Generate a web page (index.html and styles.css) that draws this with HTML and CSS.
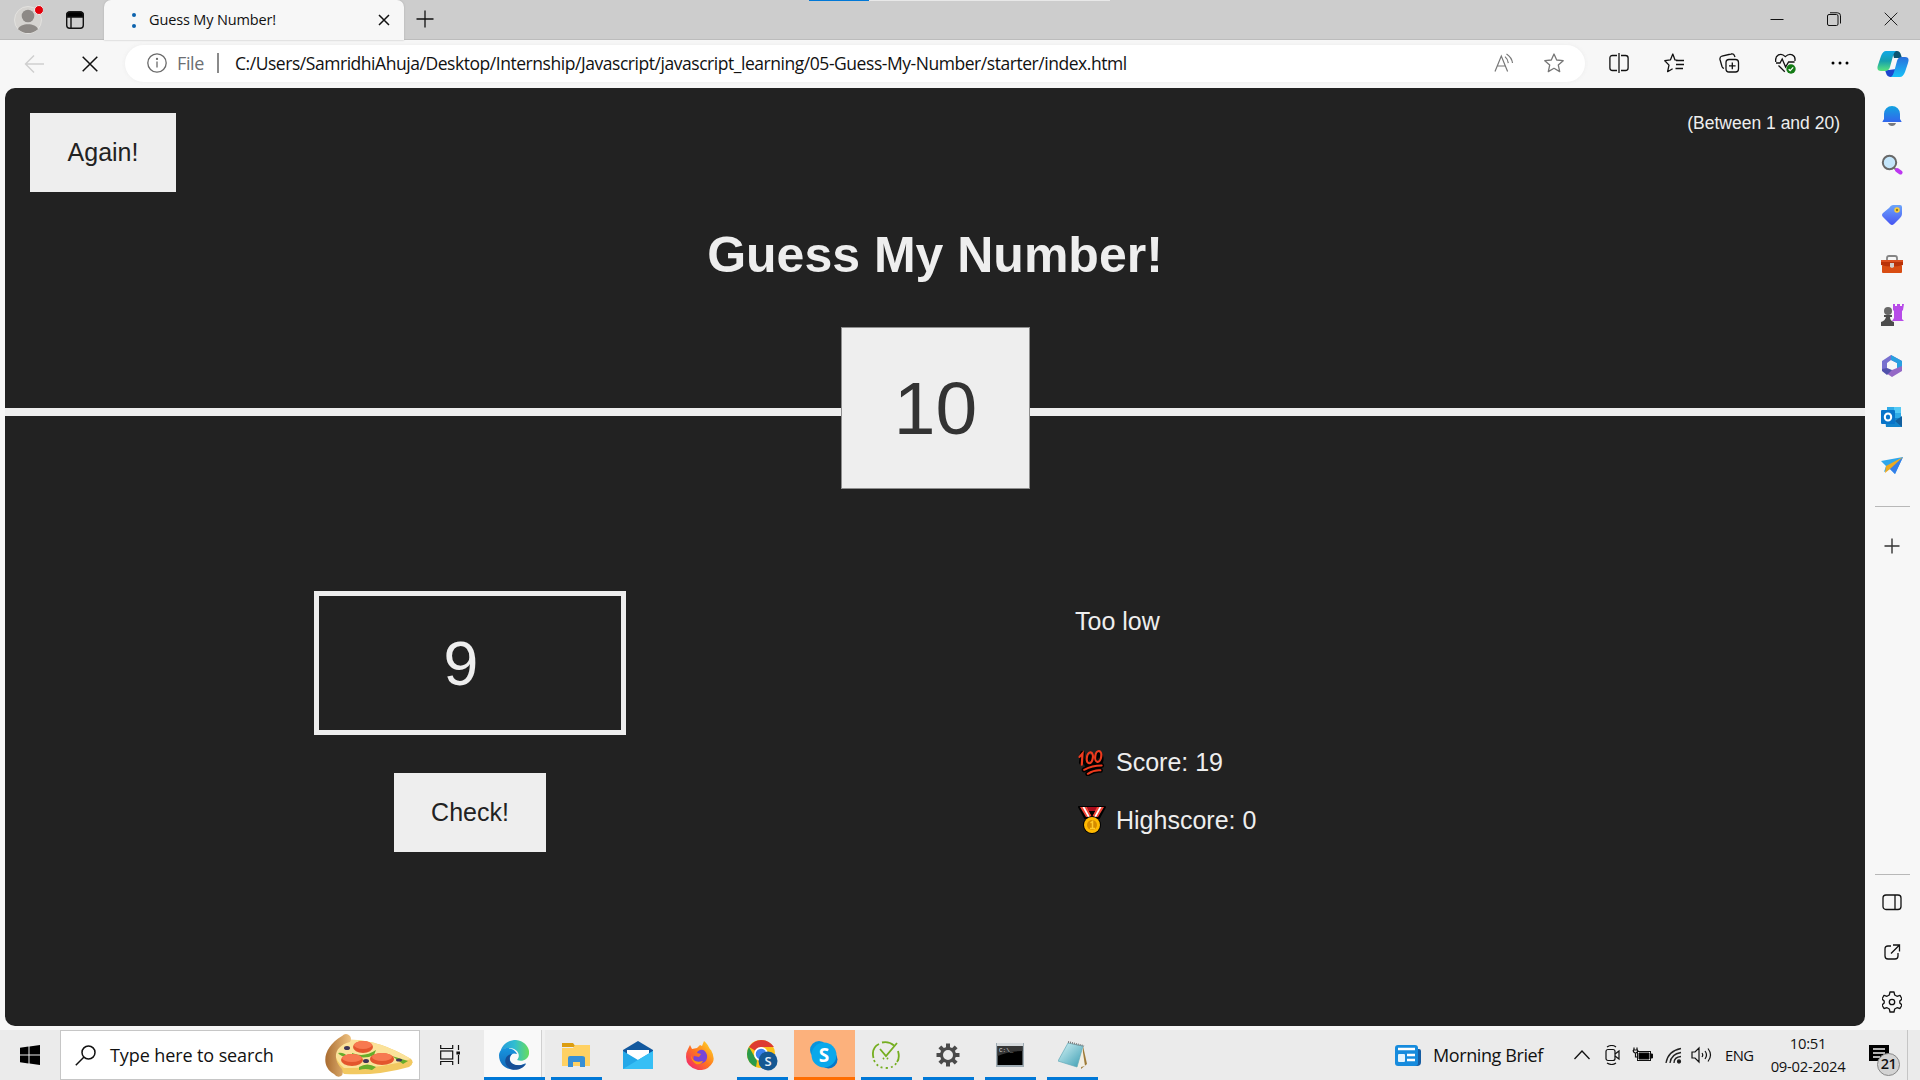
FILE: index.html
```html
<!DOCTYPE html>
<html lang="en">
<head>
<meta charset="utf-8">
<title>Guess My Number!</title>
<link rel="stylesheet" href="styles.css">
</head>
<body>
<header class="titlebar">
  <div class="profile"><svg width="30" height="30" viewBox="0 0 30 30"><circle cx="15" cy="16" r="13.5" fill="#d5d3d0" stroke="#e3e2df"/><circle cx="15" cy="12" r="6.3" fill="#8d8986"/><path d="M5 25.200C7 18.500 23 18.500 25 25.200Q15 33 5 25.200" fill="#8d8986"/><circle cx="26" cy="6" r="4.500" fill="#e3000b" stroke="#eee"/></svg></div>
  <div class="workspaces"><svg width="20" height="20" viewBox="0 0 20 20" fill="none" stroke="#111" stroke-width="1.400"><rect x="1.700" y="2" width="16.600" height="16.300" rx="3"/><path d="M6 7v11"/><path d="M2 7V5q0-3 3-3h10q3 0 3 3v2z" fill="#000"/></svg></div>
  <div class="tab">
    <span class="loader"><i></i><i></i></span>
    <span class="tab-title">Guess My Number!</span>
    <svg class="tab-close" width="12" height="12" viewBox="0 0 12 12" stroke="#111" stroke-width="1.500"><path d="M1 1l10 10M11 1L1 11"/></svg>
  </div>
  <svg class="tab-new" width="18" height="18" viewBox="0 0 18 18" stroke="#111" stroke-width="1.300"><path d="M9 .5v17M.5 9h17"/></svg>
  <div class="strip"><i></i></div>
  <div class="window-buttons">
    <svg width="14" height="14" viewBox="0 0 14 14" stroke="#111"><path d="M.5 7.500h13"/></svg>
    <svg width="14" height="14" viewBox="0 0 14 14" fill="none" stroke="#111"><rect x=".5" y="2.500" width="10.500" height="11" rx="1.500"/><path d="M3 .8h7.500q3 0 3 3v7.700"/></svg>
    <svg width="14" height="14" viewBox="0 0 14 14" stroke="#222"><path d="M.7.7l12.600 12.600M13.300.7L.7 13.300"/></svg>
  </div>
</header>
<div class="window">
  <div class="left">
    <nav class="toolbar">
      <svg class="back" width="21" height="20" viewBox="0 0 21 20" fill="none" stroke="#cfcfcf" stroke-width="1.400"><path d="M20 10H1.500M10 1.500L1.500 10l8.500 8.500"/></svg>
      <svg class="stop" width="16" height="16" viewBox="0 0 16 16" stroke="#111" stroke-width="1.500"><path d="M.7.7l14.600 14.600M15.300.7L.7 15.300"/></svg>
      <div class="address">
        <svg width="20" height="20" viewBox="0 0 20 20" fill="none" stroke="#6a6a6a" stroke-width="1.300"><circle cx="10" cy="10" r="9.200"/><path d="M10 8.500v6"/><circle cx="10" cy="5.900" r=".5"/></svg>
        <span class="scheme">File</span><span class="divider"></span>
        <span class="url">C:/Users/SamridhiAhuja/Desktop/Internship/Javascript/javascript_learning/05-Guess-My-Number/starter/index.html</span>
        <svg class="read" width="20" height="20" viewBox="0 0 20 20" fill="none" stroke="#777" stroke-width="1.200"><path d="M1 18.500L7.300 3l6.300 15.500M3.200 13h8.200M11 3.600q3 2.600 3.300 6.500M12.500 1q5.200 3.300 6 9"/></svg>
        <svg class="star" width="20" height="20" viewBox="0 0 20 20" fill="none" stroke="#777" stroke-width="1.300" stroke-linejoin="round"><path d="M10 1l2.700 6 6.500.7-4.900 4.400 1.400 6.500-5.700-3.300-5.700 3.300 1.400-6.500L.8 7.700 7.300 7z"/></svg>
      </div>
      <div class="tools">
        <svg width="20" height="20" viewBox="0 0 20 20" fill="none" stroke="#111" stroke-width="1.300"><path d="M10 0v20M8 2.500H3.500Q.9 2.500.9 5v10q0 2.500 2.600 2.500H8M12 2.500h4.500q2.600 0 2.600 2.500v10q0 2.500-2.600 2.500H12"/></svg>
        <svg width="20" height="20" viewBox="0 0 20 20" fill="none" stroke="#111" stroke-width="1.300" stroke-linejoin="round"><path d="M14 7.300l-3-.4L8.800 1 6.500 6.800.8 7.700l4.200 4.400-1.400 6.600 5-3M12 7.500h8M12 11.500h8M11.500 15.500H19"/></svg>
        <svg width="21" height="20" viewBox="0 0 21 20" fill="none" stroke="#111" stroke-width="1.300"><rect x="7" y="6.500" width="12.500" height="12.500" rx="3"/><path d="M13.300 9.500v6.800M10 12.800h6.600M16 4l-.5-1.200Q14.700.3 12 1L3 3Q.5 4 1 6.500l2 7q.5 1.500 2 2"/></svg>
        <svg width="21" height="21" viewBox="0 0 21 21" fill="none" stroke="#111" stroke-width="1.300"><path d="M.8 9C-.5 2 6-1 10.300 3.600 15-1 21 2 19.900 8M1 10h4l2.200-4 3.400 8 3-5h6M3.500 12.500l6.300 6.200"/><circle cx="16" cy="16" r="4.700" fill="#147b16" stroke="none"/><path d="M13.700 16.200l1.500 1.400 3-3.200" stroke="#fff"/></svg>
        <svg width="18" height="20" viewBox="0 0 18 20"><circle cx="2" cy="10" r="1.500"/><circle cx="9" cy="10" r="1.500"/><circle cx="16" cy="10" r="1.500"/></svg>
      </div>
    </nav>
    <main class="game">
      <header class="game-head">
        <div class="game-top"><button class="btn">Again!</button><span class="between">(Between 1 and 20)</span></div>
        <h1>Guess My Number!</h1>
        <div class="number">10</div>
      </header>
      <section class="game-body">
        <div class="guess-col"><div class="guess">9</div><button class="btn check">Check!</button></div>
        <div class="score-col">
          <p class="message">Too low</p>
          <p class="score"><svg width="28" height="28" viewBox="0 0 28 28"><g transform="rotate(-9 14 14)"><path d="M3.500 13L6 4M12 9a3 4.500 15 1 0 .1 0M21 8a3 4.500 15 1 0 .1 0" stroke="#000" stroke-width="5" fill="none" stroke-linecap="round"/><path d="M5 20.500q9-3 18-1.500M8 25q7-3 13-1.500" stroke="#000" stroke-width="5" fill="none" stroke-linecap="round"/><path d="M5 20.500q9-3 18-1.500M8 25q7-3 13-1.500" stroke="#ee3a1d" stroke-width="2" fill="none" stroke-linecap="round"/><g fill="none" stroke="#ee3a1d" stroke-width="2.200" stroke-linecap="round"><path d="M2.500 7L6 4 3.500 15"/><ellipse cx="12.500" cy="9.500" rx="3" ry="5.500" transform="rotate(18 12.500 9.500)"/><ellipse cx="21" cy="9.500" rx="3" ry="5.500" transform="rotate(18 21 9.500)"/></g></g></svg><span>Score: 19</span></p>
          <p class="score high"><svg width="28" height="28" viewBox="0 0 28 28"><path d="M1 1h26l-6 11H7z" fill="#000" stroke="#000" stroke-width="2" stroke-linejoin="round"/><path d="M9 1h11l-2 4h-7z" fill="#a90c1d"/><path d="M2 1h7l5 10H8zM26 1h-7l-5 10h6z" fill="#f04436"/><path d="M4.500 1h2l6 11h-2zM23.500 1h-2l-6 11h2z" fill="#fff"/><path d="M11 5h6l-3 5z" fill="#000"/><circle cx="14" cy="19" r="9" fill="#000"/><circle cx="14" cy="19" r="8" fill="#ffb900"/><circle cx="14" cy="19" r="5" fill="#d58b00"/><path d="M12.500 17l2-1.500V22M12 22.500h5" fill="none" stroke="#ffc928" stroke-width="1.500"/></svg><span>Highscore: 0</span></p>
        </div>
      </section>
    </main>
  </div>
  <aside class="sidebar">
    <svg class="copilot" width="32" height="28" viewBox="0 0 32 28"><defs><linearGradient id="ca" x2="0" y2="1"><stop stop-color="#10a9e6"/><stop offset=".5" stop-color="#169fae"/><stop offset="1" stop-color="#5ae47c"/></linearGradient><linearGradient id="cb" x2="0" y2="1"><stop stop-color="#296fdc"/><stop offset="1" stop-color="#18c1f8"/></linearGradient></defs><path d="M15 1h5q3 0 4 4l1 3h-8z" fill="#0b5672"/><path d="M8 20l4 0 7-1-3 8h-2q-4 0-5-4z" fill="#1c47cf"/><path d="M9 1h10q-2 1-3 5l-3 11q-1 4-5 4H4q-5 0-3-6l3-9q2-5 5-5z" fill="url(#ca)"/><path d="M23 27H14q2-1 3-5l3-11q1-4 5-4h3q5 0 3 6l-3 9q-2 5-5 5z" fill="url(#cb)"/></svg>
    <div class="apps">
      <svg width="22" height="22" viewBox="0 0 22 22"><defs><linearGradient id="bl" x2="0" y2="1"><stop stop-color="#12a3e0"/><stop offset="1" stop-color="#3266ec"/></linearGradient></defs><path d="M7 18h8q-1 3-4 3t-4-3" fill="#77797e"/><path d="M3 9a8 8 0 0116 0v5l1.500 2.500V17h-19v-.5L3 14z" fill="url(#bl)"/></svg>
      <svg width="22" height="22" viewBox="0 0 22 22"><path d="M13 14l7 5.500" stroke="#7d7d84" stroke-width="2"/><path d="M16 16l3.500 2.500" stroke="#bd37f1" stroke-width="4" stroke-linecap="round"/><circle cx="8.500" cy="8.500" r="6.700" fill="#c4e6fb" stroke="#686868" stroke-width="2"/></svg>
      <svg width="22" height="22" viewBox="0 0 22 22"><defs><linearGradient id="tg" x2="0" y2="1"><stop stop-color="#6ca5fb"/><stop offset="1" stop-color="#4654f2"/></linearGradient></defs><path d="M12 1h7q2 0 2 2v7q0 2-2 4l-6 6q-2 2-4 0l-7-7q-2-2 0-4l6-5q2-3 4-3z" fill="url(#tg)"/><circle cx="16" cy="6" r="2" fill="#94811e" stroke="#ffd039" stroke-width="1.500"/></svg>
      <svg width="24" height="22" viewBox="0 0 24 22"><path d="M7 7V5q0-2 2-2h6q2 0 2 2v2" fill="none" stroke="#858585" stroke-width="1.800"/><rect x="2" y="12" width="20" height="8" rx="1" fill="#d94d13"/><path d="M1 7h22v5q-11 3-22 0z" fill="#b93208"/><path d="M1 7h22v2H1z" fill="#db4f1f"/><path d="M10 10h4v4l-2 1-2-1z" fill="#d2cecb"/></svg>
      <svg width="24" height="24" viewBox="0 0 24 24"><path d="M13 1h2v2h2V1h3v2h2V1h2l-1 6-1 1v8l2 2H12l2-3V8l-1-1z" fill="#b74be8"/><circle cx="8" cy="8" r="4" fill="#686868"/><path d="M4 12h8v2h-2q0 4 4 5v4H1v-4q4-1 5-5H4z" fill="#4c4c4c"/></svg>
      <svg width="22" height="24" viewBox="0 0 22 24"><path d="M10 1l11 6v6l-5 2V9l-6-3-4 3v7l-5 1V7z" fill="#7770cf"/><path d="M10 1l11 6v9l-5-2V9l-6-3z" fill="#299fe0"/><path d="M21 12v5l-10 6-9-6 9-1 5-2z" fill="#9468c6"/><path d="M1 15l5-1 5 2-5 5-5-4z" fill="#5151ab"/></svg>
      <svg width="22" height="22" viewBox="0 0 22 22"><path d="M6 1h14v12H6z" fill="#2fabe8"/><path d="M13 1h7v6h-7z" fill="#53c9f5"/><path d="M4 12h17v9H5z" fill="#1384cb"/><path d="M14 15l7-5v11z" fill="#125f9e"/><rect x="0" y="4" width="14" height="14" rx="1" fill="#0874c9"/><ellipse cx="7" cy="11" rx="3.200" ry="3.600" fill="none" stroke="#fff" stroke-width="2"/></svg>
      <svg width="24" height="22" viewBox="0 0 24 22"><path d="M1 6l22-4-8 17-5-5-6 3 2-6z" fill="#2fa7ec"/><path d="M23 2L9 13l6 6z" fill="#357ee9"/><path d="M23 2L6 11 5 18 10 14z" fill="#edaa20"/></svg>
    </div>
    <hr>
    <svg class="add" width="16" height="16" viewBox="0 0 16 16" stroke="#333" stroke-width="1.400"><path d="M8 .5v15M.5 8h15"/></svg>
    <hr class="lower">
    <div class="utilities">
      <svg width="20" height="20" viewBox="0 0 20 20" fill="none" stroke="#111" stroke-width="1.300"><rect x="1" y="3" width="18" height="14.500" rx="3"/><path d="M13 3v14"/></svg>
      <svg width="20" height="20" viewBox="0 0 20 20" fill="none" stroke="#111" stroke-width="1.300"><path d="M9 4H6Q3 4 3 7v7q0 3 3 3h7q3 0 3-3v-3M11 3h6.500v6.500M9 11.500l8.500-8.500"/></svg>
      <svg width="20" height="22" viewBox="0 0 20 22" fill="none" stroke="#111" stroke-width="1.300" stroke-linejoin="round"><path d="M8 1h4l.7 3 2.300 1.300 3-1L20 8l-2.200 2v2l2.200 2-2 3.500-3-.8-2.300 1.300L12 21H8l-.7-3L5 16.700l-3 .8L0 14l2.200-2v-2L0 8l2-3.700 3 1L7.300 4z"/><circle cx="10" cy="11" r="2.700"/></svg>
    </div>
  </aside>
</div>
<footer class="taskbar">
  <div class="start"><svg width="20" height="20" viewBox="0 0 20 20"><path d="M0 2.800l8.500-1.200v7.900H0zM9.500 1.400L20 0v9.500H9.500zM0 10.500h8.500v7.900L0 17.200zM9.500 10.500H20V20L9.500 18.600z"/></svg></div>
  <div class="search">
    <svg width="21" height="21" viewBox="0 0 21 21" fill="none" stroke="#111" stroke-width="1.500"><circle cx="13.500" cy="7.500" r="6.500"/><path d="M9 12L.8 20.300"/></svg>
    <span>Type here to search</span>
    <svg class="pizza" width="90" height="44" viewBox="0 0 90 44"><defs><linearGradient id="cr"><stop stop-color="#a96c31"/><stop offset="1" stop-color="#f0c381"/></linearGradient></defs><path d="M18 7Q51 4 87 26q4 4-2 8-31 9-65 7-18-18-2-34" fill="#f2c961"/><path d="M18 7Q51 4 87 26q-30 10-67 9-16-13-2-28" fill="#fbe29a"/><path d="M18 3q4-4 8 0 2 3 0 6C10 13 8 26 18 36q2 5-1 7-4 2-7-2C-4 33-1 14 18 3" fill="url(#cr)"/><g fill="#67ad2b"><path d="M28 20q12 5 24-3l-2 5q-10 5-22 0M35 34q8-5 17 0l-4 3q-7-2-13 0M14 20q6-1 10 4-7 0-10-4M68 23l16 5-5 3z"/></g><g fill="#e3552d"><ellipse cx="39" cy="14" rx="10" ry="6"/><ellipse cx="28" cy="27" rx="11" ry="6"/><ellipse cx="58" cy="26" rx="12" ry="6"/></g><g fill="#f77950"><ellipse cx="39" cy="12" rx="9" ry="4"/><ellipse cx="28" cy="25" rx="10" ry="4"/><ellipse cx="58" cy="24" rx="10" ry="4"/></g><g fill="#3f3557"><ellipse cx="23" cy="15" rx="3" ry="2"/><ellipse cx="42" cy="28" rx="3" ry="2"/><ellipse cx="75" cy="27" rx="3" ry="1.500"/></g></svg>
  </div>
  <div class="taskview"><svg width="20" height="20" viewBox="0 0 20 20" fill="none" stroke="#111" stroke-width="1.200"><path d="M.7 0v3.500h12V0M.7 20v-3.500h12V20"/><rect x=".7" y="6" width="12" height="8"/><path d="M18.500 0v5M18.500 10v9"/><path d="M17 7h3v2h-3z" fill="#111"/></svg></div>
  <div class="task active"><svg width="30" height="30" viewBox="0 0 30 30"><defs><linearGradient id="ea"><stop stop-color="#2699dc"/><stop offset=".5" stop-color="#30bdd1"/><stop offset="1" stop-color="#69dd5c"/></linearGradient><linearGradient id="eb" x2="0" y2="1"><stop stop-color="#1795df"/><stop offset="1" stop-color="#1369b8"/></linearGradient></defs><path d="M1 14C2 4 10 0 17 0c9 1 14 8 13 14-1 6-7 8-12 6 5-6-1-13-10-12Q3 9 1 14" fill="url(#ea)"/><path d="M0 15C1 6 15 6 18 14q-6-2-7 4c-1 6 7 10 16 5-6 10-27 9-27-8" fill="url(#eb)"/><path d="M13 14c-6 5-1 15 14 10-4 6-13 8-18 3-5-5-3-12 4-13" fill="#164e96"/></svg></div>
  <div class="task open"><svg width="28" height="24" viewBox="0 0 28 24"><path d="M0 0h11l3 4H0z" fill="#dc9d10"/><path d="M0 5h11l2-3h15v21H0z" fill="#ffd163"/><path d="M6 24v-9q0-2 2-2h12q3 0 3 2v9h-5v-5h-7v5z" fill="#378fd5"/></svg></div>
  <div class="task"><svg width="30" height="28" viewBox="0 0 30 28"><path d="M0 9L15 0l15 9v4H0z" fill="#12589e"/><path d="M4 9h22v10H4z" fill="#fff"/><path d="M0 10l15 9 15-9v18H0z" fill="#24a8e8"/><path d="M0 28l30-18v18z" fill="#36bff5"/></svg></div>
  <div class="task"><svg width="28" height="29" viewBox="0 0 28 29"><defs><linearGradient id="ff" x1="1" x2="0" y2="1"><stop stop-color="#ffe629"/><stop offset=".5" stop-color="#ff761e"/><stop offset="1" stop-color="#f0177e"/></linearGradient></defs><path d="M2 8l2-4 2 4 5-1 3-3 2 1L18 0c5 4 5 8 7 9q4 7 2 12-5 9-15 8Q0 26 0 16 0 11 2 8" fill="url(#ff)"/><path d="M14 9q5-1 7 5c1 7-5 10-11 8-4-3-2-7-2-7l5 1 2-3-4-1q0-2 3-3" fill="#7945d7"/><path d="M5 14q2 9 12 6-2 4-7 3-5-3-5-9" fill="#ff980e"/></svg></div>
  <div class="task open"><svg width="32" height="32" viewBox="0 0 32 32"><circle cx="15" cy="15" r="14" fill="#fbc116"/><path d="M15 15L3 8Q8 1 15 1q8 0 13 7H15z" fill="#dd3b30"/><path d="M3 8l8 14-1 6Q1 24 1 15q0-4 2-7" fill="#299b4b"/><circle cx="15" cy="15" r="7" fill="#fff"/><circle cx="15" cy="15" r="5.300" fill="#3981ed"/><circle cx="22" cy="22" r="9.500" fill="#155893"/><text x="22" y="27" text-anchor="middle" font-family="Open Sans" font-size="13" font-weight="600" fill="#e5edf7">S</text></svg></div>
  <div class="task skype"><svg width="28" height="28" viewBox="0 0 28 28"><circle cx="9" cy="9" r="9" fill="#0994dd"/><circle cx="18.500" cy="18.500" r="9" fill="#0678c9"/><circle cx="14" cy="14" r="12.500" fill="#09a8eb"/><text x="14" y="21" text-anchor="middle" font-family="Open Sans" font-size="19" font-weight="700" fill="#fff">S</text></svg></div>
  <div class="task open"><svg width="28" height="28" viewBox="0 0 28 28" fill="none" stroke="#75ae20" stroke-width="1.800"><path d="M1.500 17Q-1 7 7 3M10 1.500q7-1.500 12 3M26 10q2 7-1 11"/><path d="M2 19q3 8 12 8t12-8" stroke-dasharray="2 3"/><path d="M8 8l6 7L25 2M11 18l1-1M16 18l-1-1"/></svg></div>
  <div class="task open"><svg width="24" height="24" viewBox="0 0 24 24"><g transform="translate(12 12)"><path id="tooth" d="M-2-11.500h4v5h-4z" fill="#4a4a4a"/><use href="#tooth" transform="rotate(45)"/><use href="#tooth" transform="rotate(90)"/><use href="#tooth" transform="rotate(135)"/><use href="#tooth" transform="rotate(180)"/><use href="#tooth" transform="rotate(225)"/><use href="#tooth" transform="rotate(270)"/><use href="#tooth" transform="rotate(315)"/><circle r="6.500" fill="none" stroke="#4a4a4a" stroke-width="3"/></g></svg></div>
  <div class="task open"><svg width="28" height="24" viewBox="0 0 28 24"><path d="M0 0h28v24H0z" fill="#9eabb3"/><path d="M1.500 3h25v19h-25z"/><path d="M1 0h26v3H1z" fill="#d5d9dc"/><path d="M1.500 3h25v5q-13 0-25 5z" fill="#363636"/><text x="3" y="9" font-family="Liberation Mono" font-size="6" fill="#ddd">C:\_</text></svg></div>
  <div class="task open"><svg width="29" height="28" viewBox="0 0 29 28"><defs><linearGradient id="np" x2="1" y2="1"><stop stop-color="#d8f5f7"/><stop offset="1" stop-color="#399cb2"/></linearGradient></defs><path d="M25 5l4 18-6 5z" fill="#9e7b38"/><path d="M24 5l3 20-8 2z" fill="#f2efe4"/><path d="M10 2l15 3-6 21L0 20z" fill="url(#np)" stroke="#62a9b7" stroke-width=".7"/><path d="M10 1l16 4" stroke="#777" stroke-width="2" stroke-dasharray="1 1"/></svg></div>
  <div class="tray">
    <svg class="news" width="26" height="21" viewBox="0 0 26 21"><path d="M20 4h4q2 0 2 2v11q0 4-4 4h-4z" fill="#165da2"/><rect width="23" height="21" rx="3" fill="#168bdd"/><path d="M3 4h17M12 10h8M12 15h8" stroke="#fff" stroke-width="2.500"/><rect x="3" y="9" width="7" height="8" rx="1" fill="#e3f3fd"/></svg>
    <span class="brief">Morning Brief</span>
    <svg class="chev" width="16" height="10" viewBox="0 0 16 10" fill="none" stroke="#111" stroke-width="1.300"><path d="M.5 9L8 1l7.500 8"/></svg>
    <svg class="cam" width="16" height="20" viewBox="0 0 16 20" fill="none" stroke="#111" stroke-width="1.200"><rect x="1" y="4.500" width="9" height="11" rx="2"/><path d="M10 9l4-3v8l-4-3M2 2q5-3 9 0M2 18q5 3 9 0"/></svg>
    <svg class="bat" width="21" height="16" viewBox="0 0 21 16" fill="none" stroke="#111"><rect x="5.500" y="4.500" width="13" height="9"/><path d="M7 6h10v6H7zM19 7h1.500v4H19z" fill="#000"/><path d="M1 3h5M2 .5V3M5 .5V3M1.200 3q0 3 2.300 3t2.300-3M3.500 6v4h2" stroke-width="1.200"/></svg>
    <svg class="wifi" width="17" height="17" viewBox="0 0 17 17" fill="none" stroke="#222" stroke-width="1.300"><path d="M1 16Q3 4 16 1.500M5 16Q6 7 16 5.500M9 16q0-6 7-6.500"/><circle cx="14" cy="14.500" r="1.500" fill="#111"/></svg>
    <svg class="vol" width="22" height="18" viewBox="0 0 22 18" fill="none" stroke="#111" stroke-width="1.200"><path d="M1 6h3l4-4v14l-4-4H1zM11 7q1.500 2 0 4M14 5q3 4 0 8M17 2.500q5 6.500 0 13"/></svg>
    <span class="eng">ENG</span>
    <div class="clock"><span>10:51</span><span>09-02-2024</span></div>
    <div class="notice"><svg width="20" height="20" viewBox="0 0 20 20"><path d="M0 0h20v16h-7l-4 4v-4H0z"/><path d="M4 4h12M4 8h12M4 12h7" stroke="#eee" stroke-width="1.500"/></svg><b>21</b></div>
    <i class="peek"></i>
  </div>
</footer>
</body>
</html>
```
FILE: styles.css
```css
* { box-sizing: border-box; }
html { height: 100%; }
body { margin: 0; width: 1920px; height: 1080px; overflow: hidden; display: flex; flex-direction: column; background: #f7f7f7; font-family: "Open Sans", "Noto Sans", sans-serif; color: #111; }
svg { display: block; flex: none; }
p, h1 { margin: 0; }
button { font: inherit; border: 0; }

.titlebar { height: 40px; flex: none; display: flex; background: #cdcdcd; box-shadow: inset 0 -1px #bcbcbc; position: relative; }
.profile { padding: 4px 0 0 13px; width: 65px; }
.workspaces { width: 39px; padding-top: 10px; }
.tab { width: 300px; height: 40px; background: #f7f7f7; border-radius: 7px 7px 0 0; display: flex; padding-left: 28px; box-shadow: 0 0 2px #aaa; }
.loader { width: 5px; padding-top: 13px; display: flex; flex-direction: column; gap: 7px; }
.loader i { width: 4px; height: 4px; border-radius: 50%; background: #0c62ad; }
.tab-title { width: 227px; padding-left: 12px; font-size: 14.500px; line-height: 39px; letter-spacing: -.15px; white-space: nowrap; }
.tab-close { margin: 14px 0 0 14px; }
.tab-new { margin: 10px 0 0 12px; }
.strip { position: absolute; left: 809px; top: 0; width: 301px; height: 1px; background: #e8e8e8; }
.strip i { display: block; width: 60px; height: 1px; background: #0078d7; }
.window-buttons { margin-left: auto; display: flex; gap: 43px; padding: 12px 22px 0 0; }

.window { flex: none; height: 990px; display: flex; }
.left { width: 1865px; display: flex; flex-direction: column; }
.toolbar { height: 48px; display: flex; align-items: center; padding: 0 0 1px 24px; }
.stop { margin-left: 37px; }
.address { margin-left: 27px; width: 1460px; height: 37px; margin-top: -1px; border-radius: 19px; background: #fff; display: flex; align-items: center; padding: 0 21px 0 22px; box-shadow: 0 0 4px #ececec; }
.scheme { width: 40px; margin-left: 10px; font-size: 18px; letter-spacing: -.4px; color: #6c6f73; }
.divider { width: 2px; height: 20px; background: #8a8a8a; }
.url { margin-left: 16px; font-size: 17.500px; letter-spacing: -.455px; white-space: nowrap; }
.read { margin-left: auto; }
.star { margin-left: 30px; }
.tools { flex: 1; display: flex; justify-content: space-between; padding: 0 16px 0 24px; }

.game { margin-left: 5px; height: 938px; border-radius: 10px; background: #222; color: #eee; font: 25px/30px "Liberation Sans", Arial, sans-serif; }
.game-head { position: relative; height: 328px; border-bottom: 8px solid #eee; padding: 25px 25px 0; }
.game-top { display: flex; justify-content: space-between; align-items: flex-start; }
.btn { width: 146px; height: 79px; padding: 0 0 2px; background: #eee; color: #222; }
.between { font-size: 17.500px; line-height: 20px; }
h1 { margin-top: 33px; text-align: center; font-size: 50px; line-height: 60px; }
.number { position: absolute; left: 836px; top: 239px; width: 189px; height: 162px; background: #eee; color: #333; border: 1px solid #8e8e8e; font-size: 75px; line-height: 160px; text-align: center; }
.game-body { display: flex; gap: 449px; padding: 175px 0 0 309px; }
.guess-col { width: 312px; display: flex; flex-direction: column; align-items: center; gap: 38px; }
.guess { width: 312px; height: 144px; border: 5px solid #eee; padding-right: 18px; text-align: center; font-size: 62.500px; line-height: 134px; }
.check { width: 152px; }
.score-col { padding-top: 15px; }
.score { display: flex; align-items: center; gap: 10px; margin: 111px 0 0 3px; height: 30px; }
.high { margin-top: 28px; }

.sidebar { width: 55px; display: flex; flex-direction: column; align-items: center; padding-right: 1px; }
.copilot { margin: 10px 0 0 1px; }
.apps { height: 372px; margin-top: 27px; display: flex; flex-direction: column; align-items: center; justify-content: space-between; }
.sidebar hr { width: 35px; height: 1px; border: 0; background: #b8b8b8; margin: 29px 0 0; flex: none; }
.add { margin-top: 31px; }
.sidebar .lower { margin-top: 320px; }
.utilities { margin-top: 17px; height: 121px; display: flex; flex-direction: column; justify-content: space-between; }

.taskbar { height: 50px; flex: none; display: flex; background: #ebebeb; }
.start { width: 60px; padding: 15px 20px; }
.search { width: 360px; background: #fff; border: 1px solid #c6c6c6; display: flex; align-items: center; padding: 0 5px 0 14px; }
.search span { margin-left: 14px; font-size: 18px; letter-spacing: -.1px; white-space: nowrap; }
.search .pizza { margin-left: auto; }
.taskview { width: 64px; padding: 15px 0 0 20px; }
.task { width: 51px; margin: 0 5.500px; display: flex; align-items: center; justify-content: center; flex: none; }
.open { border-bottom: 3px solid #0078d7; padding-top: 3px; }
.active { width: 61px; margin: 0; background: linear-gradient(90deg, #f9f9f9 57px, #d0d0d0 57px 58px, #f1f1f1 58px); border-bottom: 3px solid #0078d7; padding: 3px 2px 0 0; }
.skype { width: 61px; margin: 0 .5px; background: #fcb17c; border-bottom: 3px solid #ff6d00; padding-top: 3px; }
.tray { margin-left: auto; width: 525px; display: flex; align-items: center; }
.brief { width: 127px; margin-left: 12px; font-size: 18px; letter-spacing: -.4px; white-space: nowrap; }
.chev { margin-left: 14px; }
.cam { margin-left: 15px; }
.bat { margin-left: 11px; }
.wifi { margin-left: 12px; }
.vol { margin-left: 9px; }
.eng { width: 30px; margin-left: 12px; font-size: 14.800px; letter-spacing: -.5px; }
.clock { width: 106px; display: flex; flex-direction: column; align-items: center; font-size: 14.800px; line-height: 23px; letter-spacing: -.25px; }
.notice { position: relative; width: 46px; padding-left: 8px; }
.notice b { position: absolute; left: 16px; top: 8px; width: 23px; height: 23px; border: 1px solid #888; border-radius: 50%; background: #d3d3d3; font-size: 14.500px; letter-spacing: -.5px; font-weight: 600; line-height: 20px; text-align: center; }
.peek { width: 1px; height: 50px; background: #c5c5c5; }
```
